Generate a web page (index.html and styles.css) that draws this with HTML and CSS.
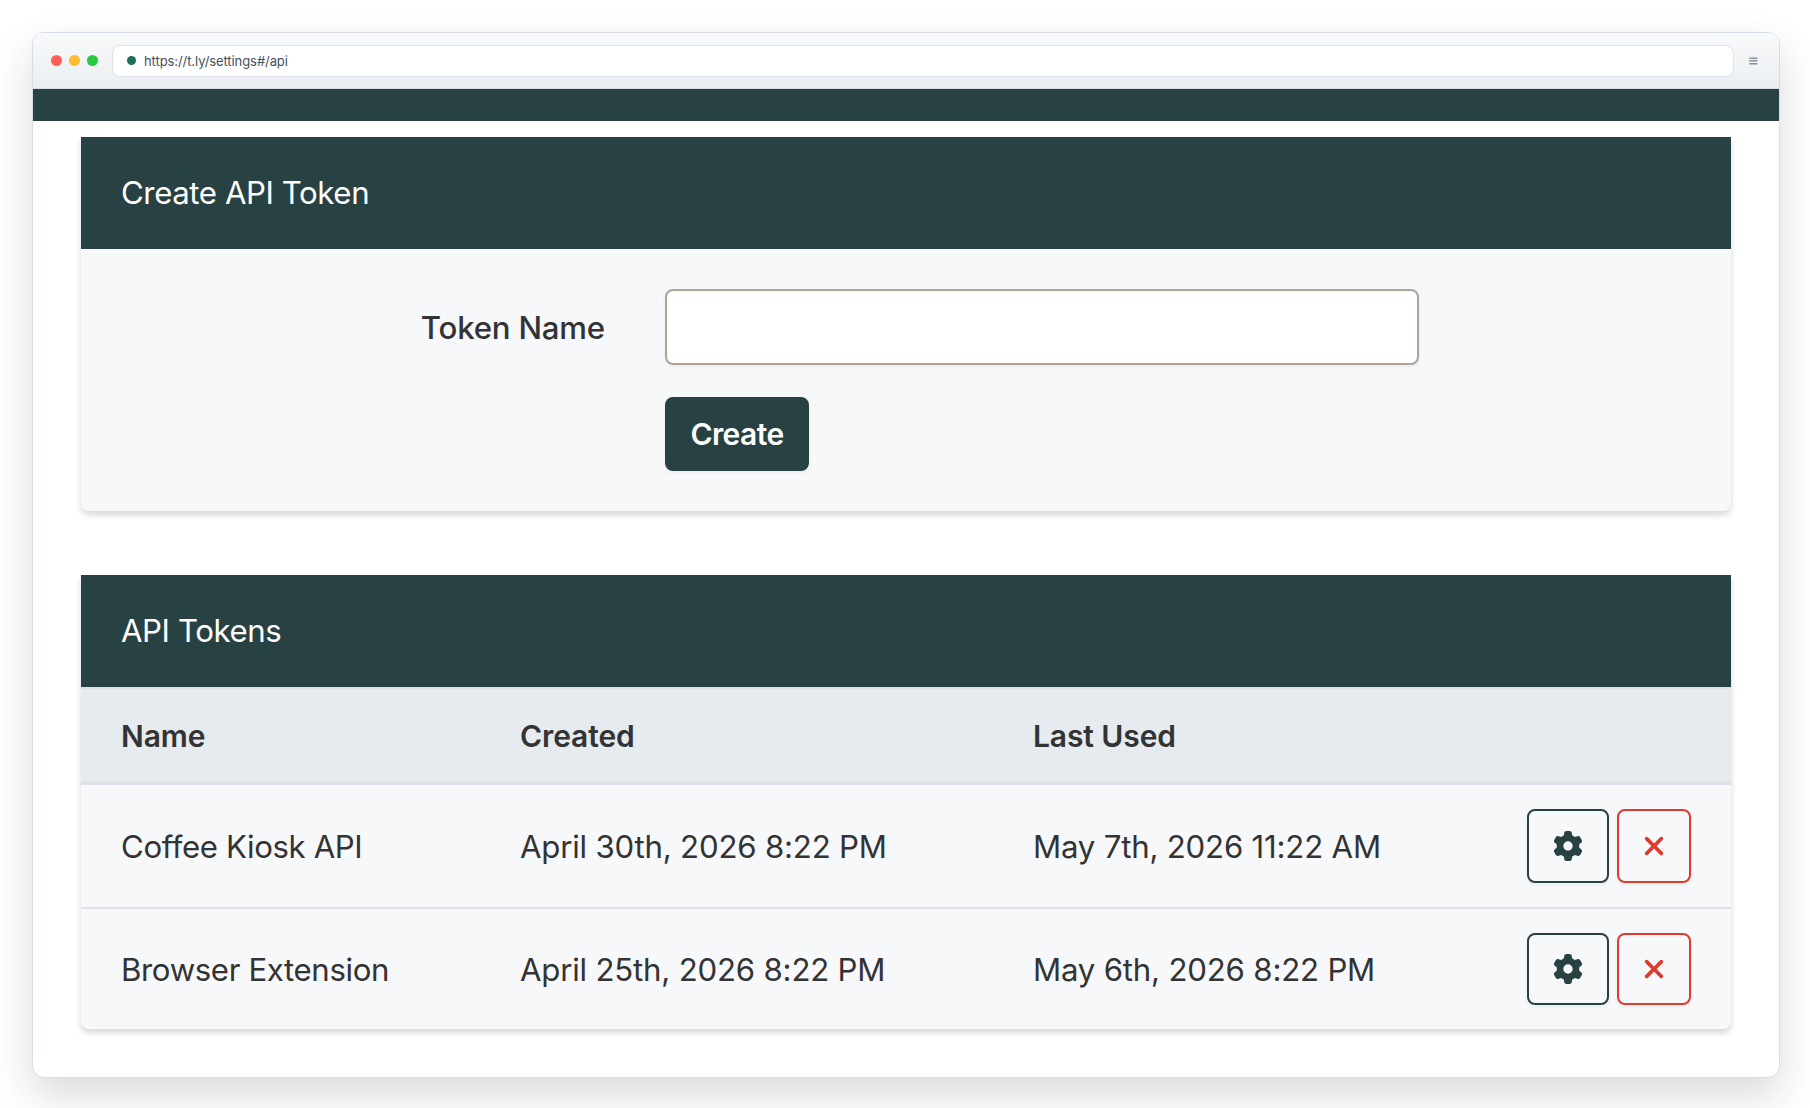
FILE: index.html
```html
<!DOCTYPE html>
<html lang="en">
<head>
  <meta charset="UTF-8">
  <meta name="viewport" content="width=device-width, initial-scale=1.0">
  <title>API Tokens</title>
  <link rel="stylesheet" href="styles.css">
</head>
<body>
  <!-- icon shapes, used by the row buttons -->
  <svg class="sprite" aria-hidden="true">
    <symbol id="gear" viewBox="0 0 512 512">
      <path d="M495.9 166.6c3.2 8.7 .5 18.4-6.4 24.6l-43.3 39.4c1.1 8.3 1.7 16.8 1.7 25.4s-.6 17.1-1.7 25.4l43.3 39.4c6.9 6.2 9.6 15.9 6.4 24.6c-4.4 11.9-9.7 23.3-15.8 34.3l-4.7 8.1c-6.6 11-14 21.4-22.1 31.2c-5.9 7.2-15.7 9.6-24.5 6.8l-55.7-17.7c-13.4 10.3-28.2 18.9-44 25.4l-12.5 57.1c-2 9.1-9 16.3-18.2 17.8c-13.8 2.3-28 3.5-42.5 3.5s-28.7-1.2-42.5-3.5c-9.2-1.5-16.2-8.7-18.2-17.8l-12.5-57.1c-15.8-6.5-30.6-15.1-44-25.4L83.1 425.9c-8.8 2.8-18.6 .3-24.5-6.8c-8.1-9.8-15.5-20.2-22.1-31.2l-4.7-8.1c-6.1-11-11.4-22.4-15.8-34.3c-3.2-8.7-.5-18.4 6.4-24.6l43.3-39.4C64.6 273.1 64 264.6 64 256s.6-17.1 1.7-25.4L22.4 191.2c-6.9-6.2-9.6-15.9-6.4-24.6c4.4-11.9 9.7-23.3 15.8-34.3l4.7-8.1c6.6-11 14-21.4 22.1-31.2c5.9-7.2 15.7-9.6 24.5-6.8l55.7 17.7c13.4-10.3 28.2-18.9 44-25.4l12.5-57.1c2-9.1 9-16.3 18.2-17.8C227.3 1.2 241.5 0 256 0s28.7 1.2 42.5 3.5c9.2 1.5 16.2 8.7 18.2 17.8l12.5 57.1c15.8 6.5 30.6 15.1 44 25.4l55.7-17.7c8.8-2.8 18.6-.3 24.5 6.8c8.1 9.8 15.5 20.2 22.1 31.2l4.7 8.1c6.1 11 11.4 22.4 15.8 34.3zM256 336a80 80 0 1 0 0-160 80 80 0 1 0 0 160z"/>
    </symbol>
    <symbol id="xmark" viewBox="0 0 384 512">
      <path d="M342.6 150.6c12.5-12.5 12.5-32.8 0-45.3s-32.8-12.5-45.3 0L192 210.7 86.6 105.4c-12.5-12.5-32.8-12.5-45.3 0s-12.5 32.8 0 45.3L146.7 256 41.4 361.4c-12.5 12.5-12.5 32.8 0 45.3s32.8 12.5 45.3 0L192 301.3 297.4 406.6c12.5 12.5 32.8 12.5 45.3 0s12.5-32.8 0-45.3L237.3 256 342.6 150.6z"/>
    </symbol>
  </svg>

  <div class="browser">
    <div class="toolbar">
      <ul class="lights">
        <li class="red"></li>
        <li class="yellow"></li>
        <li class="green"></li>
      </ul>
      <div class="address">
        <span class="dot"></span>
        <span>https://t.ly/settings#/api</span>
      </div>
      <span class="menu">≡</span>
    </div>
    <div class="navbar"></div>

    <main class="content">
      <section class="card">
        <h2 class="card_header">Create API Token</h2>
        <form class="token_form">
          <label for="name">Token Name</label>
          <input type="text" id="name">
          <button type="button" class="btn btn_primary">Create</button>
        </form>
      </section>

      <section class="card">
        <h2 class="card_header">API Tokens</h2>
        <table class="tokens">
          <thead>
            <tr>
              <th class="col_name">Name</th>
              <th class="col_created">Created</th>
              <th>Last Used</th>
              <th class="col_actions"></th>
            </tr>
          </thead>
          <tbody>
            <tr>
              <td>Coffee Kiosk API</td>
              <td>April 30th, 2026 8:22 PM</td>
              <td>May 7th, 2026 11:22 AM</td>
              <td>
                <div class="actions">
                  <button type="button" class="btn btn_edit"><svg class="gear"><use href="#gear"/></svg></button>
                  <button type="button" class="btn btn_delete"><svg class="xmark"><use href="#xmark"/></svg></button>
                </div>
              </td>
            </tr>
            <tr>
              <td>Browser Extension</td>
              <td>April 25th, 2026 8:22 PM</td>
              <td>May 6th, 2026 8:22 PM</td>
              <td>
                <div class="actions">
                  <button type="button" class="btn btn_edit"><svg class="gear"><use href="#gear"/></svg></button>
                  <button type="button" class="btn btn_delete"><svg class="xmark"><use href="#xmark"/></svg></button>
                </div>
              </td>
            </tr>
          </tbody>
        </table>
      </section>
    </main>
  </div>
</body>
</html>
```
FILE: styles.css
```css
*{
  margin: 0;
  padding: 0;
  box-sizing: border-box;
}
body{
  height: 1108px;
  padding: 32px 30px 30px 32px;
  background-color: #fff;
  color: #333;
  font-family: Inter, "Liberation Sans", sans-serif;
  font-size: 31.2px;
  letter-spacing: -0.2px;
  overflow: hidden;
}
.sprite{
  display: none;
}
.browser{
  height: 1046px;
  border: 1px solid #d8dce4;
  border-radius: 12px;
  background-color: #fff;
  box-shadow: 0 18px 40px rgba(20, 30, 35, 0.16);
  overflow: hidden;
}

/* toolbar */
.toolbar{
  height: 56px;
  padding: 0 20px 0 18px;
  display: flex;
  align-items: center;
  border-bottom: 1px solid #d8dce4;
  background: linear-gradient(#f8f9fb, #ebeff2);
}
.lights{
  display: flex;
  gap: 7px;
  list-style-type: none;
}
.lights li{
  width: 11px;
  height: 11px;
  border-radius: 50%;
}
.lights .red{
  background-color: #ff5f57;
}
.lights .yellow{
  background-color: #febc2e;
}
.lights .green{
  background-color: #28c840;
}
.address{
  flex: 1;
  height: 32px;
  margin: 0 14px;
  padding: 0 14px;
  display: flex;
  align-items: center;
  gap: 8px;
  border: 1px solid #dde2ea;
  border-radius: 8px;
  background-color: #fff;
  color: #44505c;
  font-size: 13px;
  letter-spacing: -0.08px;
}
.address .dot{
  width: 9px;
  height: 9px;
  border-radius: 50%;
  background-color: #1f6f5a;
}
.menu{
  width: 11px;
  padding-top: 1px;
  color: #8796a0;
  font-family: "DejaVu Sans", sans-serif;
  font-size: 13px;
  font-weight: 700;
  line-height: 14px;
  letter-spacing: 0;
}
.navbar{
  height: 32px;
  background-color: #284143;
}

/* cards */
.content{
  padding: 16px 48px;
  display: flex;
  flex-direction: column;
  gap: 64px;
}
.card{
  border-radius: 0 0 8px 8px;
  background-color: #f7f8fa;
  box-shadow: 0 4px 6px rgba(0, 0, 0, 0.16);
}
.card_header{
  height: 112px;
  padding: 1px 40px 0;
  background-color: #284143;
  color: #fff;
  font-size: inherit;
  font-weight: 400;
  line-height: 111px;
  letter-spacing: -0.42px;
}
.token_form{
  padding: 40px 0;
  display: grid;
  grid-template-columns: 524px 754px;
  column-gap: 60px;
  row-gap: 32px;
  align-items: center;
}
.token_form label{
  padding-top: 1px;
  font-weight: 500;
  text-align: right;
}
.token_form input{
  height: 76px;
  border: 2px solid #aea399;
  border-radius: 8px;
  background-color: #fff;
  box-shadow: 0 2px 4px rgba(0, 0, 0, 0.05);
}
.btn{
  height: 74px;
  display: flex;
  align-items: center;
  justify-content: center;
  border: 2px solid;
  border-radius: 8px;
  background-color: transparent;
  box-shadow: 0 2px 4px rgba(0, 0, 0, 0.05);
  font-family: inherit;
}
.btn svg{
  height: 30px;
  fill: currentColor;
}
.btn_primary{
  grid-column: 2;
  width: 144px;
  border-color: #284143;
  background-color: #284143;
  color: #fff;
  font-size: 30px;
  font-weight: 600;
  letter-spacing: -0.6px;
}
.btn_edit{
  width: 82px;
  color: #284143;
}
.btn_delete{
  width: 74px;
  color: #e03a2d;
}
.gear{
  width: 30px;
}
.xmark{
  width: 22px;
}

/* token list */
.tokens{
  width: 100%;
  border-spacing: 0;
  table-layout: fixed;
}
.tokens th{
  height: 98px;
  padding: 2px 24px 0;
  border-top: 2px solid #dee0e7;
  border-bottom: 4px solid #dee0e7;
  background-color: #e6ebef;
  font-size: 30px;
  font-weight: 600;
  text-align: left;
  letter-spacing: -0.1px;
}
.tokens td{
  height: 122px;
  padding: 1px 24px 0;
}
.tokens tr + tr td{
  border-top: 2px solid #dee0e7;
}
.tokens th:first-child, .tokens td:first-child{
  padding-left: 40px;
}
.tokens td:first-child{
  letter-spacing: -0.38px;
}
.tokens td:last-child{
  padding: 0 40px 0 0;
}
.tokens .col_name{
  width: 415px;
}
.tokens .col_created{
  width: 513px;
}
.tokens .col_actions{
  width: 204px;
}
.actions{
  display: flex;
  justify-content: flex-end;
  gap: 8px;
}
.tokens tr:last-child .btn{
  height: 72px;
}
```
